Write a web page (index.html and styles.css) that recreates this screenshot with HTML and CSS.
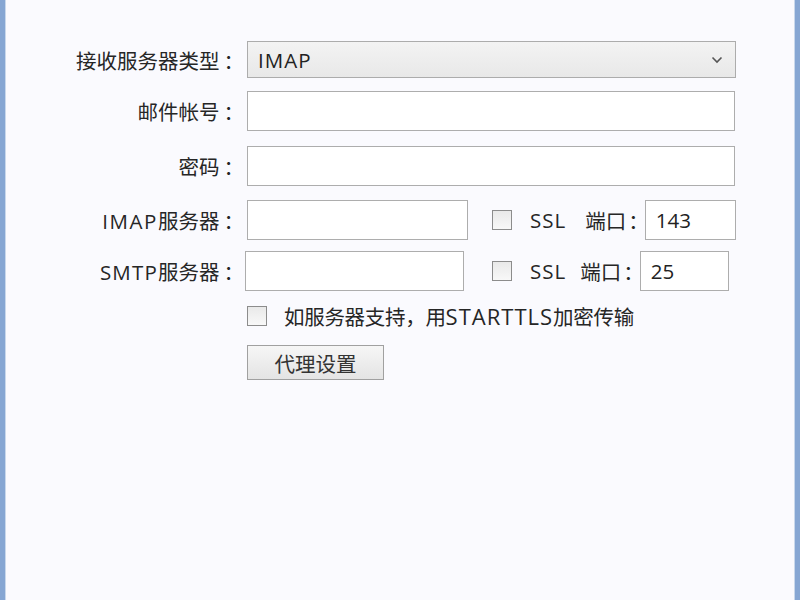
FILE: index.html
```html
<!DOCTYPE html>
<html lang="zh-CN">
<head>
<meta charset="utf-8">
<title>邮件服务器设置</title>
<link rel="stylesheet" href="styles.css">
</head>
<body>
<div class="window">
  <form class="form">
    <div class="row r-type">
      <label class="label">接收服务器类型<span class="colon">：</span></label>
      <div class="select">
        <span class="lat lat-imap">IMAP</span>
        <svg class="chev" width="12" height="8" viewBox="0 0 12 8"><path d="M1.5 1.5 L6 6 L10.5 1.5" fill="none" stroke="#555" stroke-width="1.6"/></svg>
      </div>
    </div>
    <div class="row r-acct">
      <label class="label">邮件帐号<span class="colon">：</span></label>
      <div class="input wide"></div>
    </div>
    <div class="row r-pass">
      <label class="label">密码<span class="colon">：</span></label>
      <div class="input wide"></div>
    </div>
    <div class="row r-imap">
      <label class="label"><span class="lat lat-imap-label">IMAP</span>服务器<span class="colon">：</span></label>
      <div class="input host"></div>
      <span class="check ssl-check"></span>
      <span class="ssl">SSL</span>
      <span class="port-label">端口<span class="colon">：</span></span>
      <div class="input port"><span class="val">143</span></div>
    </div>
    <div class="row r-smtp">
      <label class="label"><span class="lat lat-smtp">SMTP</span>服务器<span class="colon">：</span></label>
      <div class="input host smtp-host"></div>
      <span class="check ssl-check smtp-check"></span>
      <span class="ssl">SSL</span>
      <span class="port-label smtp-port-label">端口<span class="colon">：</span></span>
      <div class="input port"><span class="val">25</span></div>
    </div>
    <div class="row r-tls">
      <span class="label"></span>
      <span class="check"></span>
      <span class="tls-text">如服务器支持，用<span class="lat-tls">STARTTLS</span>加密传输</span>
    </div>
    <div class="row r-btn">
      <span class="label"></span>
      <button type="button" class="btn">代理设置</button>
    </div>
  </form>
</div>
</body>
</html>
```
FILE: styles.css
```css
html, body {
  margin: 0;
  padding: 0;
  height: 100%;
}
body {
  background: #fafafe;
  font-family: "Open Sans", "Noto Sans CJK SC", sans-serif;
  color: #262626;
}
.window {
  box-sizing: border-box;
  height: 600px;
  width: 800px;
  border-left: 5px solid #86a6d3;
  border-right: 5px solid #86a6d3;
  background: #fafafe;
  box-shadow: inset 1px 0 0 #c9d8ec, inset -1px 0 0 #c9d8ec;
}
.form {
  padding-top: 41px;
  display: flex;
  flex-direction: column;
}
.row {
  display: flex;
  align-items: center;
  font-size: 20.5px;
}
.label {
  width: 242px;
  flex: none;
  text-align: right;
  padding-right: 3px;
  box-sizing: border-box;
  white-space: nowrap;
}
.colon {
  margin-left: 4px;
}
.lat-imap { letter-spacing: 1px; }
.lat-imap-label { letter-spacing: 1.6px; }
.lat-smtp { letter-spacing: 1.2px; }
.select {
  box-sizing: border-box;
  width: 489px;
  height: 37px;
  border: 1px solid #acacac;
  background: linear-gradient(#f3f3f3, #e8e8e8);
  display: flex;
  align-items: center;
  justify-content: space-between;
  padding: 0 12px 0 10px;
  color: #222;
}
.input {
  box-sizing: border-box;
  height: 40px;
  border: 1px solid #adadad;
  background: #fff;
  display: flex;
  align-items: center;
}
.wide { width: 488px; }
.r-acct { margin-top: 13px; }
.r-pass { margin-top: 15px; }
.r-imap { margin-top: 14px; }
.r-smtp { margin-top: 11px; }
.r-tls { margin-top: 10px; }
.r-btn { margin-top: 14px; }
.host { width: 221px; }
.smtp-host { margin-left: -2px; width: 219px; }
.check {
  box-sizing: border-box;
  width: 20px;
  height: 20px;
  border: 1px solid #8c8c8c;
  background: linear-gradient(#e9e9e9, #f8f8f8);
  flex: none;
}
.ssl-check { margin-left: 24px; }
.smtp-check { margin-left: 28px; }
.ssl { margin-left: 18px; letter-spacing: 1px; }
.port-label { margin-left: 19px; white-space: nowrap; }
.port-label .colon { margin-left: 2px; margin-right: -4px; }
.smtp-port-label { margin-left: 14px; }
.port {
  width: 91px;
  padding-left: 10px;
  color: #222;
}
.r-smtp .port { width: 89px; }
.tls-text { margin-left: 17px; letter-spacing: -0.3px; white-space: nowrap; }
.lat-tls { font-size: 22px; letter-spacing: 1px; }
.btn {
  box-sizing: border-box;
  width: 137px;
  height: 35px;
  border: 1px solid #a0a0a0;
  background: linear-gradient(#f6f6f6, #e4e4e4);
  font-family: inherit;
  font-size: 20.5px;
  color: #333;
  padding: 0;
  margin-left: 0;
}
```
